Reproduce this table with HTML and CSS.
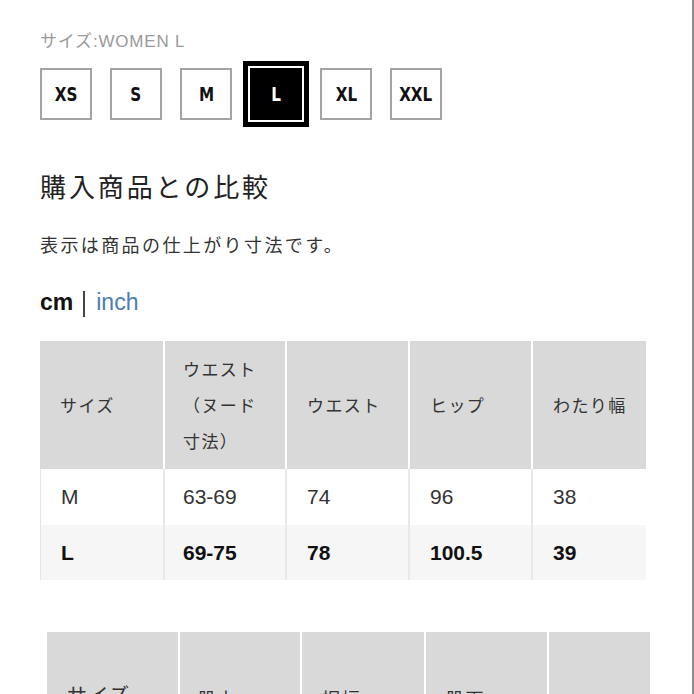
FILE: index.html
```html
<!DOCTYPE html>
<html lang="ja">
<head>
<meta charset="utf-8">
<link rel="stylesheet" href="styles.css">
</head>
<body>
<div class="page">
  <div class="label">サイズ:WOMEN L</div>
  <div class="sizes">
    <div class="size"><span>XS</span></div>
    <div class="size"><span>S</span></div>
    <div class="size"><span>M</span></div>
    <div class="size on"><span>L</span></div>
    <div class="size"><span>XL</span></div>
    <div class="size"><span>XXL</span></div>
  </div>
  <h2 class="title">購入商品との比較</h2>
  <p class="note">表示は商品の仕上がり寸法です。</p>
  <div class="units"><span class="cm">cm</span><span class="sep"></span><span class="inch">inch</span></div>

  <table class="chart">
    <colgroup><col class="c1"><col class="c2"><col class="c3"><col class="c4"><col class="c5"></colgroup>
    <thead>
      <tr><th>サイズ</th><th>ウエスト<br>（ヌード<br>寸法）</th><th>ウエスト</th><th>ヒップ</th><th>わたり幅</th></tr>
    </thead>
    <tbody>
      <tr class="m"><td>M</td><td>63-69</td><td>74</td><td>96</td><td>38</td></tr>
      <tr class="l"><td>L</td><td>69-75</td><td>78</td><td>100.5</td><td>39</td></tr>
    </tbody>
  </table>

  <table class="chart chart2">
    <colgroup><col class="d1"><col class="d2"><col class="d3"><col class="d4"><col class="d5"></colgroup>
    <thead>
      <tr><th class="low">サイズ</th><th class="low2">股上</th><th class="low2">裾幅</th><th class="low2">股下</th><th></th></tr>
    </thead>
  </table>
</div>
</body>
</html>
```

FILE: styles.css
```css
html, body {
  margin: 0;
  padding: 0;
  background: #fff;
}
body {
  font-family: "Liberation Sans", "Noto Sans CJK JP", sans-serif;
  color: #333;
}
.page {
  width: 694px;
  height: 694px;
  box-sizing: border-box;
  border-right: 2px solid #8c8c8c;
  padding-left: 40px;
  overflow: hidden;
}
.label {
  margin-top: 32px;
  font-size: 17px;
  line-height: 20px;
  color: #9a9a9a;
  letter-spacing: 0.8px;
}
.sizes {
  display: flex;
  gap: 18px;
  margin-top: 16px;
}
.size {
  width: 52px;
  height: 52px;
  box-sizing: border-box;
  border: 2px solid #a3a3a3;
  display: flex;
  align-items: center;
  justify-content: center;
  font-family: "DejaVu Sans", sans-serif;
  font-weight: bold;
  font-size: 19px;
  color: #111;
}
.size span {
  display: inline-block;
  transform: scaleX(0.8);
}
.size.on {
  background: #000;
  color: #fff;
  border: none;
  box-shadow: 0 0 0 2px #fff, 0 0 0 7px #000;
}
.title {
  margin: 48px 0 0;
  font-family: "Noto Sans CJK JP", sans-serif;
  font-weight: normal;
  font-size: 26px;
  line-height: 36px;
  letter-spacing: 2.9px;
  color: #222;
}
.note {
  margin: 28px 0 0;
  font-family: "Noto Sans CJK JP", sans-serif;
  font-size: 18px;
  line-height: 24px;
  letter-spacing: 2.4px;
  color: #333;
}
.units {
  margin-top: 35px;
  height: 26px;
  display: flex;
  align-items: center;
  font-size: 23px;
  line-height: 26px;
}
.cm {
  font-weight: bold;
  color: #111;
  position: relative;
  top: -2px;
}
.inch {
  position: relative;
  top: -2px;
  color: #4b7db5;
}
.sep {
  width: 2px;
  height: 26px;
  background: #444;
  margin: 0 11px 0 10px;
}
.chart {
  margin-top: 24px;
  border-collapse: separate;
  border-spacing: 0;
  table-layout: fixed;
  width: 606px;
  font-size: 21px;
}
.c1 { width: 125px; }
.c2 { width: 122px; }
.c3 { width: 123px; }
.c4 { width: 123px; }
.c5 { width: 113px; }
.chart th {
  background: #d9d9d9;
  height: 128px;
  padding: 0 0 0 20px;
  box-sizing: border-box;
  border-right: 2px solid #fff;
  text-align: left;
  vertical-align: middle;
  font-family: "Noto Sans CJK JP", sans-serif;
  font-weight: normal;
  font-size: 17px;
  line-height: 36px;
  letter-spacing: 1.4px;
  color: #333;
}
.chart th:nth-child(2) { padding-left: 18px; }
.chart th:last-child { border-right: none; }
.chart td {
  padding: 0 0 0 20px;
  border-right: 2px solid #e8e8e8;
  text-align: left;
  vertical-align: middle;
}
.chart td:nth-child(2) { padding-left: 18px; }
.chart td:first-child { border-left: 1px solid #e6e6e6; }
.chart td:last-child { border-right: none; }
.chart tr.m td {
  height: 56px;
  background: #fff;
  color: #333;
}
.chart tr.l td {
  height: 55px;
  background: #f6f6f6;
  font-weight: bold;
  color: #111;
}
.chart2 {
  margin-top: 52px;
  margin-left: 7px;
  width: 603px;
}
.d1 { width: 133px; }
.d2 { width: 122px; }
.d3 { width: 124px; }
.d4 { width: 123px; }
.d5 { width: 101px; }
.chart2 th {
  height: 128px;
  vertical-align: top;
  padding-left: 20px;
  font-size: 20px;
}
.chart2 th.low { padding-top: 45px; }
.chart2 th.low2 { padding-top: 48px; font-size: 18px; }
```
